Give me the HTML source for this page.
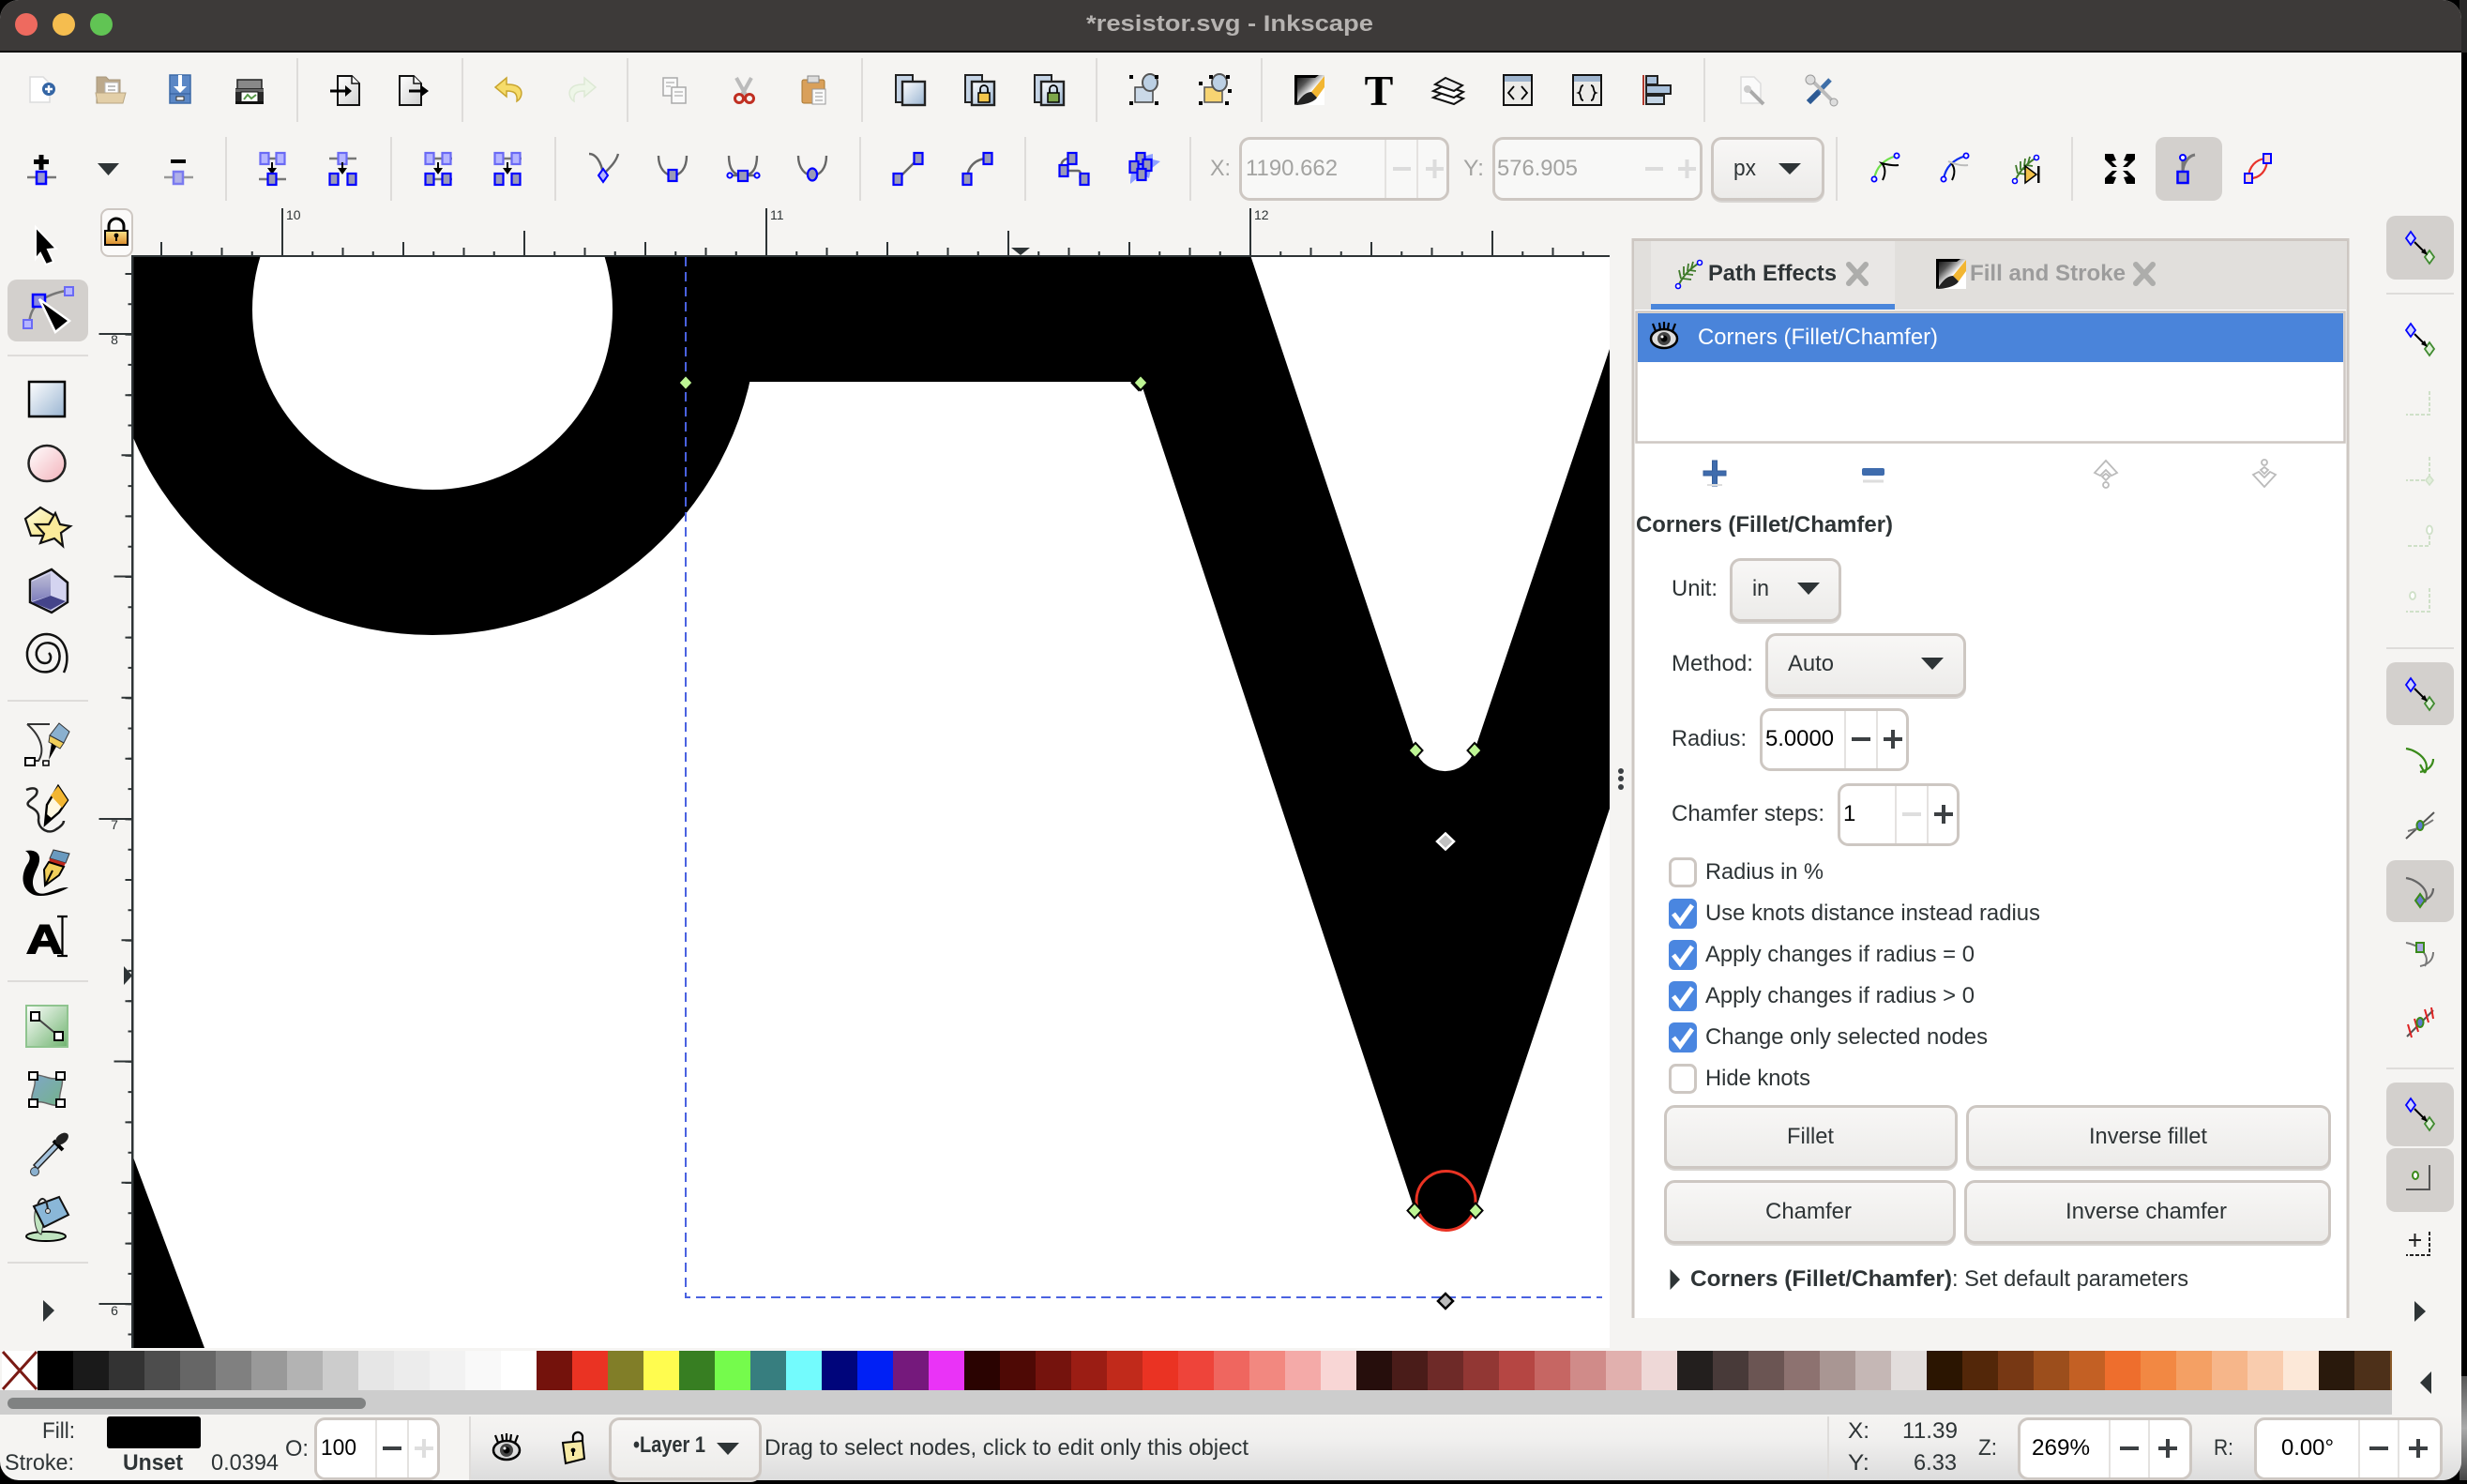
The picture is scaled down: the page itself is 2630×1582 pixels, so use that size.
<!DOCTYPE html>
<html><head><meta charset="utf-8"><title>*resistor.svg - Inkscape</title>
<style>
html,body{margin:0;padding:0;background:#000;width:2630px;height:1582px;overflow:hidden}
svg{display:block}
text{font-family:"Liberation Sans",sans-serif;font-size:24px;fill:#2e3436}
.b{font-weight:bold}
.g{fill:#a3a3a1}
.k{fill:#000}
.box{fill:#fff;stroke:#cdc7c2;stroke-width:3}
.dis{fill:#f8f8f7;stroke:#cdc7c2;stroke-width:3}
.btn{fill:url(#gBtn);stroke:#cdc7c2;stroke-width:3;filter:drop-shadow(0 2px 0 #d8d5d2)}
.div{stroke:#e4e2e0;stroke-width:2}
.sep{stroke:#dedcda;stroke-width:2}
.act{fill:#d3d0cd}
</style></head><body>
<svg xmlns="http://www.w3.org/2000/svg" width="2630" height="1582" viewBox="0 0 2630 1582">
<defs>
<clipPath id="win"><rect x="0" y="0" width="2624" height="1578" rx="20"/></clipPath>
<linearGradient id="gBtn" x1="0" y1="0" x2="0" y2="1"><stop offset="0" stop-color="#f8f7f6"/><stop offset="1" stop-color="#ecebe9"/></linearGradient>
<linearGradient id="gStat" x1="0" y1="0" x2="0" y2="1"><stop offset="0" stop-color="#f5f4f2"/><stop offset=".4" stop-color="#f0efee"/><stop offset="1" stop-color="#dcdcdc"/></linearGradient>
<linearGradient id="gLB" x1="0" y1="0" x2="1" y2="1"><stop offset="0" stop-color="#fff"/><stop offset="1" stop-color="#9ab5d2"/></linearGradient>
<linearGradient id="gPink" x1="0" y1="0" x2="1" y2="1"><stop offset="0" stop-color="#fff"/><stop offset="1" stop-color="#f3b3bb"/></linearGradient>
<linearGradient id="gYel" x1="0" y1="0" x2="1" y2="1"><stop offset="0" stop-color="#fffde0"/><stop offset="1" stop-color="#f4e27c"/></linearGradient>
<linearGradient id="gGold" x1="0" y1="0" x2="0" y2="1"><stop offset="0" stop-color="#fce48a"/><stop offset="1" stop-color="#d98a2a"/></linearGradient>
<linearGradient id="gPage" x1="0" y1="0" x2="1" y2="1"><stop offset="0" stop-color="#fff"/><stop offset="1" stop-color="#cfcfcf"/></linearGradient>
<linearGradient id="gGrn" x1="0" y1="0" x2="1" y2="1"><stop offset="0" stop-color="#fff"/><stop offset="1" stop-color="#6fb36f"/></linearGradient>
<linearGradient id="gMesh" x1="0" y1="0" x2="1" y2="1"><stop offset="0" stop-color="#7fa6c8"/><stop offset="1" stop-color="#74b38a"/></linearGradient>
<linearGradient id="gBox" x1="0" y1="0" x2="0" y2="1"><stop offset="0" stop-color="#b8b8d0"/><stop offset="1" stop-color="#6a6ab0"/></linearGradient>
<linearGradient id="gPen" x1="0" y1="0" x2="1" y2="1"><stop offset="0" stop-color="#000"/><stop offset=".3" stop-color="#555"/><stop offset=".55" stop-color="#fff"/><stop offset="1" stop-color="#fff"/></linearGradient>
<g id="eye"><path d="M-9,-5 L-12,-13 M-4,-7 L-5,-14 M0,-7 L0,-15 M4,-7 L5,-14 M9,-5 L12,-13" stroke="#000" stroke-width="2.2" fill="none"/><ellipse cx="0" cy="3" rx="14" ry="10" fill="#ddd" stroke="#000" stroke-width="2.5"/><circle cx="0" cy="3" r="7" fill="#444"/><circle cx="0" cy="3" r="3.5" fill="#000"/><circle cx="-2" cy="1" r="1.5" fill="#fff"/></g>
<g id="fern"><path d="M-11,13 C-6,2 2,-6 12,-12" stroke="#3f7a2a" stroke-width="2" fill="none"/><path d="M-8,5 L-10,-4 M-5,1 L-5,-8 M-1,-3 L0,-11 M3,-6 L5,-13 M-6,5 L3,6 M-3,0 L5,1 M1,-4 L8,-3" stroke="#3f7a2a" stroke-width="1.8" fill="none"/><circle cx="-11" cy="13" r="2.5" fill="#fff" stroke="#00f" stroke-width="1.6"/><circle cx="12" cy="-12" r="2.5" fill="#fff" stroke="#00f" stroke-width="1.6"/></g>
<g id="tabx"><path d="M-9,-10 L9,10 M9,-10 L-9,10" stroke="#adadab" stroke-width="6" stroke-linecap="round"/></g>
<g id="pen"><path d="M-16,-16H16V16H-16Z" fill="url(#gPen)"/><path d="M-16,-16H10L6,-13H-13V14L-16,16Z" fill="#000"/><path d="M16,-15 L2,2 L8,8 L16,-3Z" fill="#f2b632"/><path d="M2,2 C-5,2 -10,9 -15,16 C-6,16 5,13 8,8Z" fill="#222"/></g>
<g id="snap"><path d="M-10,-17 L-5,-10 L-10,-3 L-15,-10Z" fill="#cfd2ff" stroke="#00f" stroke-width="1.8"/><path d="M10,3 L15,10 L10,17 L5,10Z" fill="#dfeed8" stroke="#3f8a2f" stroke-width="1.8"/><path d="M-6,-6 L6,6" stroke="#000" stroke-width="2"/><path d="M8,8 L1,5 L5,1Z" fill="#000"/></g>
<g id="sq"><rect x="-4.5" y="-6" width="9" height="12" fill="#9a9ab8" stroke="#00f" stroke-width="2.2"/></g>
<g id="sqf"><rect x="-4.5" y="-6" width="9" height="12" fill="#b5b5ff" stroke="#6a6af5" stroke-width="2.2"/></g>
<g id="cb"><rect x="0" y="0" width="30" height="32" rx="6" fill="#4a86e0"/><path d="M5,16 L12,25 L25,7" stroke="#fff" stroke-width="5" fill="none"/></g>
<g id="cu"><rect x="1.5" y="1.5" width="27" height="29" rx="6" fill="#fff" stroke="#cdc7c2" stroke-width="3"/></g>
<g id="nd"><path d="M-7.5,0 L0,-8 L7.5,0 L0,8Z" fill="#bdf593" stroke="#000" stroke-width="2"/></g>
</defs>

<rect width="2630" height="1582" fill="#000"/>
<linearGradient id="gEdge" x1="0" y1="0" x2="0" y2="1"><stop offset="0" stop-color="#555"/><stop offset=".5" stop-color="#aaa"/><stop offset="1" stop-color="#444"/></linearGradient>
<rect x="2622" y="1467" width="8" height="111" fill="url(#gEdge)"/>
<rect x="2622" y="0" width="8" height="56" fill="#2a2928"/>

<g clip-path="url(#win)">
<rect width="2624" height="1578" fill="#f5f4f2"/>
<rect width="2624" height="54" fill="#3d3a39"/>
<rect y="54" width="2624" height="2" fill="#0c0c0c"/>
<rect x="501" y="1508" width="2123" height="70" fill="url(#gStat)"/>
</g>

<circle cx="28" cy="26" r="12" fill="#ee6a5f"/><circle cx="68" cy="26" r="12" fill="#f5bd4f"/><circle cx="108" cy="26" r="12" fill="#61c454"/>
<text x="1158" y="33" class="b" textLength="306" lengthAdjust="spacingAndGlyphs" style="fill:#b6b3b1">*resistor.svg - Inkscape</text>

<!-- toolbar separators -->
<path class="sep" d="M317,62V130M493,62V130M669,62V130M919,62V130M1169,62V130M1345,62V130M1817,62V130M241,146V214M417,146V214M592,146V214M917,146V214M1093,146V214M1269,146V214M1958,146V214M2209,146V214"/>

<!-- toolbar 1 -->
<g transform="translate(43,96)"><path d="M-11,-14H3L10,-7V13H-11Z" fill="#fff" stroke="#dcdcdc" stroke-width="1.5"/><circle cx="9" cy="-1" r="7" fill="#3465a4"/><path d="M5,-1H13M9,-5V3" stroke="#fff" stroke-width="2.4"/></g>
<g transform="translate(118,96)"><path d="M-15,14V-14H-5L-2,-11H10V14Z" fill="#bca98b" stroke="#a8977c"/><rect x="-6" y="-8" width="14" height="16" fill="#fff" stroke="#bbb"/><path d="M-3,-4H5M-3,0H5M-3,4H5" stroke="#aaa" stroke-width="1.5"/><path d="M-16,3H16L13,14H-14Z" fill="#e3cfa8" stroke="#b8a684"/></g>
<g transform="translate(192,95)"><path d="M-11,-15H11V15H-11Z" fill="#5b87c5" stroke="#3d6aa8" stroke-width="1.5"/><path d="M-11,5H11" stroke="#2f5a96"/><path d="M-2,-15V-3H-7L0,4L7,-3H2V-15Z" fill="#fff"/><rect x="-4" y="8" width="8" height="4" fill="#fff" stroke="#333"/></g>
<g transform="translate(266,98)"><rect x="-13" y="-13" width="26" height="10" fill="#888" stroke="#222" stroke-width="1.5"/><rect x="-15" y="-4" width="30" height="15" fill="#2a2a2a"/><rect x="-15" y="-3" width="30" height="3" fill="#666"/><rect x="-9" y="0" width="18" height="12" fill="#fff" stroke="#111"/><path d="M-6,8L-2,3L2,7L7,3" stroke="#5a9a4a" stroke-width="2" fill="none"/><rect x="-15" y="10" width="30" height="3" fill="#111"/></g>
<g transform="translate(367,96)"><path d="M-7,-15H8L16,-7V16H-7Z" fill="url(#gPage)" stroke="#111" stroke-width="2"/><path d="M8,-15V-7H16" fill="#fff" stroke="#111" stroke-width="1.5"/><path d="M-15,1H3" stroke="#000" stroke-width="3"/><path d="M1,-5L8,1L1,7Z" fill="#000"/></g>
<g transform="translate(438,96)"><path d="M-12,-15H3L11,-7V16H-12Z" fill="url(#gPage)" stroke="#111" stroke-width="2"/><path d="M3,-15V-7H11" fill="#fff" stroke="#111" stroke-width="1.5"/><path d="M-2,1H12" stroke="#000" stroke-width="3"/><path d="M11,-5L19,1L11,7Z" fill="#000"/></g>
<g transform="translate(544,96)"><path d="M-4,-13L-16,-3L-4,7V1C4,1 8,3 7,12C14,8 16,-7 -4,-6Z" fill="#f6dc6a" stroke="#c9a52f" stroke-width="1.5"/></g>
<g transform="translate(619,96) scale(-1,1)"><path d="M-4,-13L-16,-3L-4,7V1C4,1 8,3 7,12C14,8 16,-7 -4,-6Z" fill="#eef6e8" stroke="#dde9d5" stroke-width="1.5"/></g>
<g transform="translate(719,96)"><rect x="-12" y="-13" width="15" height="19" fill="#fafafa" stroke="#aaa" stroke-width="1.5"/><rect x="-3" y="-3" width="15" height="17" fill="#fafafa" stroke="#aaa" stroke-width="1.5"/><path d="M-9,-8H0M-9,-4H-4M0,2H9M0,6H9" stroke="#bbb" stroke-width="1.5"/></g>
<g transform="translate(793,96)"><path d="M-8,-13L2,5M8,-13L-2,5" stroke="#bbb" stroke-width="4"/><circle cx="-5" cy="9" r="4.5" fill="none" stroke="#c02f22" stroke-width="3"/><circle cx="6" cy="9" r="4.5" fill="none" stroke="#c02f22" stroke-width="3"/></g>
<g transform="translate(867,96)"><rect x="-12" y="-11" width="24" height="25" rx="2" fill="#d9a05a" stroke="#a87733"/><rect x="-6" y="-15" width="12" height="7" fill="#ddd" stroke="#888"/><rect x="-1" y="-1" width="14" height="16" fill="#fafafa" stroke="#999"/><path d="M2,3H10M2,7H10M2,11H10" stroke="#aaa" stroke-width="1.3"/></g>
<g transform="translate(970,96)"><rect x="-15" y="-16" width="18" height="29" fill="#c5d4e6" stroke="#222" stroke-width="2"/><rect x="-8" y="-9" width="24" height="25" fill="url(#gLB)" stroke="#222" stroke-width="2.4"/></g>
<g transform="translate(1044,96)"><rect x="-15" y="-16" width="18" height="29" fill="#c5d4e6" stroke="#222" stroke-width="2"/><rect x="-8" y="-9" width="24" height="25" fill="url(#gLB)" stroke="#222" stroke-width="2.4"/><rect x="-1" y="3" width="12" height="10" fill="#f3c64c" stroke="#000" stroke-width="1.5"/><path d="M1,3V-1A4,4 0 0 1 9,-1V3" fill="none" stroke="#000" stroke-width="1.8"/></g>
<g transform="translate(1118,96)"><rect x="-15" y="-16" width="18" height="29" fill="#c5d4e6" stroke="#222" stroke-width="2"/><rect x="-8" y="-9" width="24" height="25" fill="url(#gLB)" stroke="#222" stroke-width="2.4"/><rect x="-1" y="3" width="12" height="10" fill="#7da64a" stroke="#000" stroke-width="1.5"/><path d="M1,3V-1A4,4 0 0 1 9,-1V3" fill="none" stroke="#000" stroke-width="1.8"/></g>
<g transform="translate(1219,96)"><rect x="-9" y="-3" width="19" height="16" fill="#cbd9e8" stroke="#444" stroke-width="1.5"/><ellipse cx="7" cy="-8" rx="8" ry="9" fill="#bcd0e4" stroke="#555" stroke-width="2"/><path d="M-15,-16h4v4h-4zM12,-16h4v4h-4zM-15,12h4v4h-4zM12,12h4v4h-4z" fill="#000"/></g>
<g transform="translate(1293,96)"><rect x="-9" y="-3" width="19" height="16" fill="#f7d472" stroke="#555" stroke-width="1.5"/><ellipse cx="7" cy="-8" rx="8" ry="9" fill="#bcd0e4" stroke="#555" stroke-width="2"/><path d="M-15,-9h4v4h-4zM-4,-16h4v4h-4zM14,-16h4v4h-4zM-15,12h4v4h-4zM13,12h4v4h-4z M16,-1h4v4h-4z" fill="#000"/></g>
<use href="#pen" x="1396" y="96"/>
<text x="1470" y="112" text-anchor="middle" style="font-family:'Liberation Serif',serif;font-size:46px;font-weight:bold;fill:#000">T</text>
<g transform="translate(1544,96)" fill="#fff" stroke="#111" stroke-width="2"><path d="M-16,8L-4,2L16,9L6,15Z"/><path d="M-16,1L-4,-5L16,2L6,8Z"/><path d="M-14,-6L-3,-13L15,-5L6,1Z" fill="#eee"/></g>
<g transform="translate(1618,96)"><rect x="-15" y="-16" width="30" height="32" fill="#ecebe8" stroke="#111" stroke-width="2"/><rect x="-14" y="-15" width="28" height="6" fill="#9fb5cf"/><path d="M-4,-4L-10,3L-4,10M4,-4L10,3L4,10" stroke="#000" stroke-width="1.8" fill="none"/></g>
<g transform="translate(1692,96)"><rect x="-15" y="-16" width="30" height="32" fill="#ecebe8" stroke="#111" stroke-width="2"/><rect x="-14" y="-15" width="28" height="6" fill="#9fb5cf"/><path d="M-4,-5C-8,-5 -6,2 -9,3C-6,4 -8,11 -4,11M4,-5C8,-5 6,2 9,3C6,4 8,11 4,11" stroke="#000" stroke-width="1.8" fill="none"/></g>
<g transform="translate(1767,96)"><rect x="-16" y="-16" width="2" height="32" fill="#b03a2e"/><rect x="-12" y="-15" width="12" height="9" fill="#a9c1dc" stroke="#222" stroke-width="2"/><rect x="-12" y="-5" width="26" height="9" fill="#a9c1dc" stroke="#222" stroke-width="2"/><rect x="-12" y="6" width="19" height="9" fill="#c4d5e6" stroke="#222" stroke-width="2"/></g>
<g transform="translate(1868,96)"><path d="M-12,-14H2L9,-7V14H-12Z" fill="#fafafa" stroke="#ddd" stroke-width="1.5"/><path d="M-5,-2L12,15" stroke="#aaa" stroke-width="4"/><circle cx="-5" cy="-1" r="4" fill="#ccc"/></g>
<g transform="translate(1941,96)"><path d="M-13,13L10,-11" stroke="#3f6fa8" stroke-width="5"/><path d="M-2,2L-13,13" stroke="#2d5a94" stroke-width="6"/><path d="M-11,-12L14,13" stroke="#bbb" stroke-width="4"/><circle cx="-11" cy="-11" r="5" fill="#ddd" stroke="#999"/><circle cx="14" cy="13" r="4" fill="#ddd" stroke="#999"/></g>

<!-- toolbar 2 -->
<g transform="translate(44,180)"><rect x="-2.5" y="-15" width="5" height="16" fill="#000"/><rect x="-8" y="-10" width="16" height="5" fill="#000"/><path d="M-15,9H16" stroke="#777" stroke-width="2.5"/><rect x="-5" y="3" width="10" height="13" fill="#9a9ad0" stroke="#00f" stroke-width="2.5"/></g>
<path d="M104,174H127L115.5,187Z" fill="#2e3436"/>
<g transform="translate(190,180)"><rect x="-8" y="-10" width="16" height="4" fill="#000"/><path d="M-15,9H16" stroke="#999" stroke-width="2.5"/><rect x="-5" y="3" width="10" height="13" fill="#b0b0e8" stroke="#7a7af0" stroke-width="2.5"/></g>
<g transform="translate(290,180)"><path d="M-8,-11H10M-14,11H15" stroke="#777" stroke-width="2.4"/><use href="#sqf" x="-8" y="-11"/><use href="#sqf" x="9" y="-11"/><path d="M0,-7V0" stroke="#000" stroke-width="2"/><path d="M-5,-1H5L0,6Z" fill="#000"/><use href="#sq" x="0" y="11"/></g>
<g transform="translate(365,180)"><path d="M-14,-11H15" stroke="#777" stroke-width="2.4"/><use href="#sqf" x="0" y="-11"/><path d="M0,-7V0" stroke="#000" stroke-width="2"/><path d="M-5,-1H5L0,6Z" fill="#000"/><use href="#sq" x="-9" y="11"/><use href="#sq" x="10" y="11"/></g>
<g transform="translate(467,180)"><path d="M-14,-11H15M-14,11H15" stroke="#777" stroke-width="2.4"/><use href="#sqf" x="-9" y="-11"/><use href="#sqf" x="9" y="-11"/><path d="M0,-7V0" stroke="#000" stroke-width="2"/><path d="M-5,-1H5L0,6Z" fill="#000"/><use href="#sq" x="-9" y="11"/><use href="#sq" x="9" y="11"/></g>
<g transform="translate(541,180)"><path d="M-14,-11H15" stroke="#777" stroke-width="2.4"/><use href="#sqf" x="-9" y="-11"/><use href="#sqf" x="9" y="-11"/><path d="M0,-7V0" stroke="#000" stroke-width="2"/><path d="M-5,-1H5L0,6Z" fill="#000"/><use href="#sq" x="-9" y="11"/><use href="#sq" x="9" y="11"/></g>
<g transform="translate(643,180)" fill="none" stroke="#666" stroke-width="2.4"><path d="M-15,-16C-8,-16 -2,-8 0,6"/><path d="M16,-16C14,-8 8,-2 0,6"/><path d="M0,0L5,7L0,14L-5,7Z" fill="#b5b5ff" stroke="#00f" stroke-width="2"/></g>
<g transform="translate(717,180)" fill="none" stroke="#666" stroke-width="2.4"><path d="M-15,-14C-15,0 -7,7 0,7C8,7 15,0 15,-14"/><rect x="-4.5" y="1" width="9" height="12" fill="#9a9ab8" stroke="#00f" stroke-width="2.2"/></g>
<g transform="translate(792,180)" fill="none" stroke="#666" stroke-width="2.4"><path d="M-15,-14C-15,0 -10,7 0,7C10,7 15,0 15,-14"/><path d="M-14,7H14"/><circle cx="-14" cy="7" r="2.6" fill="#fff" stroke="#00f" stroke-width="2"/><circle cx="15" cy="7" r="2.6" fill="#fff" stroke="#00f" stroke-width="2"/><rect x="-5" y="2" width="10" height="11" fill="#9a9ab8" stroke="#00f" stroke-width="2.2"/></g>
<g transform="translate(866,180)" fill="none" stroke="#666" stroke-width="2.4"><path d="M-15,-14C-15,0 -7,7 0,7C8,7 15,0 15,-14"/><ellipse cx="0" cy="6" rx="5" ry="6.5" fill="#9a9ab8" stroke="#00f" stroke-width="2.2"/></g>
<g transform="translate(968,180)"><path d="M-11,11L11,-11" stroke="#666" stroke-width="2.4"/><use href="#sq" x="-11" y="11"/><use href="#sq" x="11" y="-11"/></g>
<g transform="translate(1042,180)"><path d="M-11,11C-11,-2 -2,-11 11,-11" stroke="#666" stroke-width="2.4" fill="none"/><use href="#sq" x="-11" y="11"/><use href="#sq" x="11" y="-11"/></g>
<g transform="translate(1144,180)"><path d="M-1,-11C-15,-13 -15,2 -8,2H5C12,2 2,15 13,11" stroke="#666" stroke-width="2.4" fill="none"/><use href="#sq" x="-1" y="-11"/><use href="#sq" x="-10" y="2"/><use href="#sq" x="12" y="11"/></g>
<g transform="translate(1219,180)"><path d="M-14,16C-14,2 -10,-12 10,-16V-10L18,-8L8,0L6,10L-2,6Z" fill="#8fa0ff"/><use href="#sq" x="-3" y="-11"/><use href="#sq" x="-10" y="-2"/><use href="#sq" x="4" y="-4"/><use href="#sq" x="-2" y="6"/></g>

<rect x="1322.5" y="147.500" width="221" height="65" rx="10" class="dis"/>
<path class="div" d="M1477,149V211M1511,149V211M1747,149V211M1781,149V211"/>
<text x="1290" y="187" class="g" textLength="22" lengthAdjust="spacingAndGlyphs">X:</text>
<text x="1328" y="187" class="g" textLength="98" lengthAdjust="spacingAndGlyphs">1190.662</text>
<path d="M1485,178h19v4h-19zM1520,178h19v4h-19zM1527.500,170h4v20h-4z" fill="#dcdcdc"/>
<rect x="1592.500" y="147.500" width="221" height="65" rx="10" class="dis"/>
<text x="1560" y="187" class="g" textLength="22" lengthAdjust="spacingAndGlyphs">Y:</text>
<text x="1596" y="187" class="g" textLength="86" lengthAdjust="spacingAndGlyphs">576.905</text>
<path d="M1754,178h19v4h-19zM1789,178h19v4h-19zM1796.500,170h4v20h-4z" fill="#dcdcdc"/>
<rect x="1825.500" y="147.500" width="118" height="65" rx="10" class="btn"/>
<text x="1848" y="187" textLength="24" lengthAdjust="spacingAndGlyphs">px</text>
<path d="M1896,174H1920L1908,186Z" fill="#2e3436"/>
<g transform="translate(2010,180)" fill="none"><path d="M-12,11C-10,-2 -2,-10 12,-14" stroke="#6fe04a" stroke-width="2.2"/><path d="M-3,12C2,2 -2,-4 -4,-6C0,-5 8,-3 14,-4" stroke="#000" stroke-width="2"/><circle cx="-12" cy="11" r="2.6" fill="#fff" stroke="#00f" stroke-width="1.8"/><circle cx="12" cy="-14" r="2.6" fill="#fff" stroke="#00f" stroke-width="1.8"/></g>
<g transform="translate(2084,180)" fill="none"><path d="M-12,11C-10,-2 -2,-10 12,-14" stroke="#0a2cf0" stroke-width="2.2"/><path d="M-3,12C2,2 -2,-4 -4,-6" stroke="#000" stroke-width="2"/><path d="M-7,-8C0,-5 8,-3 14,-4" stroke="#bbb" stroke-width="2"/><circle cx="-12" cy="11" r="2.6" fill="#fff" stroke="#00f" stroke-width="1.8"/><circle cx="12" cy="-14" r="2.6" fill="#fff" stroke="#00f" stroke-width="1.8"/></g>
<g transform="translate(2159,180)"><use href="#fern" x="0" y="0"/><path d="M0,-3L12,6L0,15Z" fill="#f2c14a" stroke="#000" stroke-width="1.5"/><rect x="13" y="-3" width="2.5" height="18" fill="#000"/></g>
<g transform="translate(2260,180)" fill="#000"><path d="M-16,-16H-7L-4,-9L-9,-8L-3,-2L-8,-2L-16,-10Z"/><path d="M16,-16H7L4,-9L9,-8L3,-2L8,-2L16,-10Z"/><path d="M-16,16H-7L-4,9L-9,8L-3,2L-8,2L-16,10Z"/><path d="M16,16H7L4,9L9,8L3,2L8,2L16,10Z"/></g>
<rect x="2298" y="146" width="71" height="68" rx="10" class="act"/>
<g transform="translate(2327,180)"><path d="M0,-14V2M0,4C0,-6 6,-14 13,-15" stroke="#777" stroke-width="3" fill="none"/><circle cx="0" cy="-12" r="3" fill="#fff" stroke="#00f" stroke-width="2"/><rect x="-5.500" y="3" width="11" height="12" fill="#9a9ab8" stroke="#00f" stroke-width="2.5"/></g>
<g transform="translate(2407,180)" fill="none"><path d="M-10,10C-10,-2 -2,-11 10,-11C10,2 2,11 -10,10Z" stroke="#e8322a" stroke-width="2.2"/><rect x="-14" y="5" width="8" height="10" fill="#ffd0d0" stroke="#00f" stroke-width="2"/><rect x="6" y="-16" width="8" height="10" fill="#ffd0d0" stroke="#00f" stroke-width="2"/></g>

<!-- canvas -->
<rect x="141" y="272" width="1575" height="1165" fill="#fff"/>
<svg x="141" y="274" width="1575" height="1163" viewBox="141 274 1575 1163">
<circle cx="461" cy="330" r="347" fill="#000"/>
<path d="M141,272H1333L1509,800A33.500,33.500 0 0 0 1572,800L1716,372V862L1573,1290A36,36 0 0 1 1508,1290L1216,407H141Z" fill="#000"/>
<circle cx="461" cy="330" r="192" fill="#fff"/>
<path d="M141,1231L218,1437H141Z" fill="#000"/>
<path d="M731,274V1383H1708" fill="none" stroke="#4a62e0" stroke-width="2" stroke-dasharray="10 6"/>
<use href="#nd" x="731" y="408"/><use href="#nd" x="1214" y="408"/><use href="#nd" x="1216" y="408"/>
<use href="#nd" x="1509" y="800"/><use href="#nd" x="1572" y="800"/>
<ellipse cx="1541.500" cy="1280" rx="31.500" ry="31.500" fill="none" stroke="#ea3323" stroke-width="3"/>
<use href="#nd" x="1508" y="1290.500"/><use href="#nd" x="1573" y="1290.500"/>
<path d="M1532,897L1541,888.500L1550,897L1541,905.500Z" fill="#c0c0c0" stroke="#fff" stroke-width="2.500"/>
<path d="M1533,1387L1541,1379L1549,1387L1541,1395Z" fill="#bbb" stroke="#000" stroke-width="2.500"/>
</svg>

<!-- rulers -->
<g stroke="#2e3436" fill="none">
<path d="M171,270H1716" stroke-width="4" stroke-dasharray="2 30.25"/>
<path d="M171,265H1716" stroke-width="14" stroke-dasharray="2 127"/>
<path d="M171,268H1716" stroke-width="8" stroke-dasharray="0 64.500 2 62.500"/>
<path d="M300,259H1716" stroke-width="26" stroke-dasharray="2 256"/>
<path d="M300,247H1716" stroke-width="50" stroke-dasharray="2 514"/>
<path d="M139,291V1437" stroke-width="5" stroke-dasharray="2 30.300"/>
<path d="M137.500,291V1437" stroke-width="8" stroke-dasharray="2 62.600"/>
<path d="M135.500,355V1437" stroke-width="12" stroke-dasharray="2 127.250"/>
<path d="M131.500,355V1437" stroke-width="20" stroke-dasharray="2 256.500"/>
<path d="M123.500,355V1437" stroke-width="36" stroke-dasharray="2 515"/>
</g>
<rect x="141" y="272" width="1575" height="2" fill="#2e3436"/>
<rect x="140" y="272" width="2.500" height="1165" fill="#2e3436"/>
<g style="fill:#2e3436"><text x="305" y="234" style="font-size:14px">10</text><text x="821" y="234" style="font-size:14px">11</text><text x="1337" y="234" style="font-size:14px">12</text>
<text x="122" y="367" text-anchor="middle" style="font-size:14px">8</text><text x="122" y="884" text-anchor="middle" style="font-size:14px">7</text><text x="122" y="1402" text-anchor="middle" style="font-size:14px">6</text></g>
<path d="M1078,264H1098L1088,272Z" fill="#2e3436"/>
<path d="M132,1030L141,1040L132,1050Z" fill="#2e3436"/>
<!-- lock button -->
<rect x="108" y="223" width="33" height="50" rx="8" fill="#fbfaf9" stroke="#cdc7c2" stroke-width="2"/>
<g transform="translate(124,248)"><path d="M-8,-2V-7A8,8 0 0 1 8,-7V-2" fill="none" stroke="#000" stroke-width="3"/><rect x="-12" y="-2" width="24" height="15" fill="url(#gGold)" stroke="#000" stroke-width="2"/><circle cx="0" cy="3" r="2.4" fill="#000"/><rect x="-1" y="3" width="2" height="6" fill="#000"/></g>

<!-- left toolbar -->
<path d="M38,242L60,265L51,266L57,279L49,282L43,270L38,276Z" fill="#000" stroke="#fff" stroke-width="2"/>
<rect x="8" y="298" width="86" height="66" rx="10" class="act"/>
<g transform="translate(50,330)"><path d="M-19,18C-19,2 -12,-14 20,-20" stroke="#777" stroke-width="2.500" fill="none"/><rect x="-25" y="11" width="9" height="9" fill="#b5b5ff" stroke="#6a6af5" stroke-width="2"/><rect x="19" y="-24" width="9" height="9" fill="#b5b5ff" stroke="#6a6af5" stroke-width="2"/><rect x="-15" y="-16" width="13" height="13" fill="#8a8ae0" stroke="#00f" stroke-width="2.500"/><path d="M-8,-11L24,12L9,24Z" fill="#000" stroke="#fff" stroke-width="2.500"/></g>
<path class="sep" d="M8,379H94M8,747H94M8,1046H94M8,1346H94"/>
<rect x="31" y="407" width="38" height="37" fill="url(#gLB)" stroke="#000" stroke-width="2.500"/>
<ellipse cx="50" cy="494" rx="19.500" ry="19" fill="url(#gPink)" stroke="#222" stroke-width="2.500"/>
<g transform="translate(50,562)" stroke="#111" stroke-width="2.200"><path d="M-23,-9L-7,-21L10,-11L4,9L-17,9Z" fill="url(#gYel)"/><path d="M9,-15L14,-3L25,-1L15,6L17,20L8,12L-7,17L-3,7L-12,-3L2,-3Z" fill="#fbeb9a"/></g>
<g transform="translate(51,630)"><path d="M-19,-12L4,-23L21,-9V12L4,23L-19,12Z" fill="#d4d4f0" stroke="#111" stroke-width="2.500"/><path d="M-17,-10L3,-19V5L-17,11Z" fill="url(#gBox)" opacity=".8"/><path d="M3,5L19,11L3,20L-17,12Z" fill="#44448a"/></g>
<path d="M68,717C76,700 70,677 50,676C35,676 28,690 29,699C30,712 42,718 52,716C62,714 66,702 62,692C58,684 46,683 41,690C36,697 40,707 48,707C54,707 56,700 52,696" fill="none" stroke="#111" stroke-width="2.500"/>
<!-- pen tool -->
<path d="M29,772H53M29,772C44,785 48,800 41,811H35M45,813H49" fill="none" stroke="#333" stroke-width="2"/>
<rect x="27" y="808" width="10" height="8" fill="#fff" stroke="#000" stroke-width="2"/><rect x="46" y="811" width="6" height="5" fill="#fff" stroke="#000" stroke-width="1.500"/>
<path d="M63,771L74,780L68,792L53,784Z" fill="#8ab0cf" stroke="#333"/><path d="M53,784L68,792L64,798L52,791Z" fill="#f2cf5a" stroke="#333"/><path d="M55,792L60,796L52,810Z" fill="#000"/>
<!-- pencil -->
<path d="M28,842C38,838 42,842 38,848C32,854 26,856 32,860C40,864 42,868 41,874C41,884 52,890 60,884C65,881 68,878 68,875" fill="none" stroke="#222" stroke-width="2.500"/>
<path d="M48,879L50,858L62,838L72,853L63,866Z" fill="#fff8e0" stroke="#000" stroke-width="2.400"/>
<path d="M62,838L72,853L66,861L54,848Z" fill="#f2b632"/>
<path d="M48,879L50,868L56,873Z" fill="#000"/>
<!-- calligraphy -->
<path d="M27,907C38,905 45,910 41,922C38,930 31,940 38,950C46,958 60,945 73,946C62,953 42,958 34,953C20,945 24,928 30,920C33,915 32,910 27,907Z" fill="#000"/>
<path d="M57,906L74,910L70,920L53,915Z" fill="#6a9abf" stroke="#333"/><path d="M53,915L70,920L68,924L52,919Z" fill="#c0281c"/>
<path d="M52,919L68,924L63,933L48,944L47,927Z" fill="#f2cf5a" stroke="#000" stroke-width="2"/><path d="M48,944L56,928" stroke="#000" stroke-width="2"/>
<text x="28" y="1016" class="b k" style="font-size:44px;stroke:#000;stroke-width:1.500" textLength="39" lengthAdjust="spacingAndGlyphs">A</text>
<path d="M61,977H72M66.500,977V1019M61,1019H72" stroke="#000" stroke-width="2.200" fill="none"/>
<rect x="28" y="1072" width="44" height="44" fill="url(#gGrn)" stroke="#8fc48f" stroke-width="2"/>
<path d="M38,1084L62,1104" stroke="#444" stroke-width="2"/><rect x="33" y="1079" width="9" height="9" fill="#fff" stroke="#000" stroke-width="2"/><rect x="58" y="1100" width="9" height="9" fill="#fff" stroke="#000" stroke-width="2"/>
<path d="M35,1147C45,1143 55,1155 65,1147C70,1155 60,1168 65,1177C55,1182 45,1170 35,1177C30,1168 42,1155 35,1147Z" fill="url(#gMesh)" stroke="#666" stroke-width="1.500"/>
<path d="M31,1143h9v8h-9zM60,1143h9v8h-9zM31,1172h9v8h-9zM60,1172h9v8h-9z" fill="#fff" stroke="#000" stroke-width="2"/>
<g transform="translate(50,1230)"><path d="M-14,12L10,-13L14,-9L-10,16Z" fill="#a5c3dd" stroke="#222" stroke-width="1.500"/><path d="M7,-14L17,-4" stroke="#000" stroke-width="4"/><ellipse cx="16" cy="-16" rx="8" ry="5" fill="#222" transform="rotate(-40 16 -16)"/><circle cx="-13" cy="19" r="4.500" fill="#8ab0cf" stroke="#333"/></g>
<g transform="translate(50,1298)"><ellipse cx="-1" cy="20" rx="21" ry="5" fill="#bfe3bf" stroke="#000" stroke-width="2"/><path d="M-12,-10C-15,2 -12,16 -6,18L-2,-3Z" fill="#bfe3bf" stroke="#333"/><path d="M-14,-12L13,-22L23,-3L-3,10Z" fill="#8ab7d8" stroke="#111" stroke-width="2"/><path d="M-10,-13C-7,-24 0,-22 1,-8" fill="none" stroke="#222" stroke-width="2"/><circle cx="1" cy="-7" r="2.500" fill="#ddd" stroke="#222"/></g>
<path d="M46,1386L58,1397L46,1409Z" fill="#2e3436"/>

<!-- palette -->
<rect x="2" y="1440" width="38" height="42" fill="#fff"/>
<path d="M3,1441L39,1481M39,1441L3,1481" stroke="#7a1a14" stroke-width="3"/>
<g>
<rect x="40" y="1440" width="38" height="42" fill="#000000"/><rect x="78" y="1440" width="38" height="42" fill="#1a1a1a"/><rect x="116" y="1440" width="38" height="42" fill="#333333"/><rect x="154" y="1440" width="38" height="42" fill="#4d4d4d"/><rect x="192" y="1440" width="38" height="42" fill="#666666"/><rect x="230" y="1440" width="38" height="42" fill="#808080"/><rect x="268" y="1440" width="38" height="42" fill="#999999"/><rect x="306" y="1440" width="38" height="42" fill="#b3b3b3"/><rect x="344" y="1440" width="38" height="42" fill="#cccccc"/><rect x="382" y="1440" width="38" height="42" fill="#e6e6e6"/><rect x="420" y="1440" width="38" height="42" fill="#ececec"/><rect x="458" y="1440" width="38" height="42" fill="#f2f2f2"/><rect x="496" y="1440" width="38" height="42" fill="#f9f9f9"/><rect x="534" y="1440" width="38" height="42" fill="#ffffff"/><rect x="572" y="1440" width="38" height="42" fill="#74120c"/><rect x="610" y="1440" width="38" height="42" fill="#ea3323"/><rect x="648" y="1440" width="38" height="42" fill="#817e28"/><rect x="686" y="1440" width="38" height="42" fill="#fffc4f"/><rect x="724" y="1440" width="38" height="42" fill="#377e22"/><rect x="762" y="1440" width="38" height="42" fill="#75fb4c"/><rect x="800" y="1440" width="38" height="42" fill="#377e7f"/><rect x="838" y="1440" width="38" height="42" fill="#73fbfd"/><rect x="876" y="1440" width="38" height="42" fill="#00057b"/><rect x="914" y="1440" width="38" height="42" fill="#0020f5"/><rect x="952" y="1440" width="38" height="42" fill="#75197c"/><rect x="990" y="1440" width="38" height="42" fill="#ea33f7"/><rect x="1028" y="1440" width="38" height="42" fill="#2a0301"/><rect x="1066" y="1440" width="38" height="42" fill="#4e0905"/><rect x="1104" y="1440" width="38" height="42" fill="#75130d"/><rect x="1142" y="1440" width="38" height="42" fill="#9b1d14"/><rect x="1180" y="1440" width="38" height="42" fill="#c12a1b"/><rect x="1218" y="1440" width="38" height="42" fill="#ea3323"/><rect x="1256" y="1440" width="38" height="42" fill="#ee443a"/><rect x="1294" y="1440" width="38" height="42" fill="#ef665f"/><rect x="1332" y="1440" width="38" height="42" fill="#f28880"/><rect x="1370" y="1440" width="38" height="42" fill="#f4aaa8"/><rect x="1408" y="1440" width="38" height="42" fill="#f8d6d5"/><rect x="1446" y="1440" width="38" height="42" fill="#260e0c"/><rect x="1484" y="1440" width="38" height="42" fill="#4a1c19"/><rect x="1522" y="1440" width="38" height="42" fill="#6e2a28"/><rect x="1560" y="1440" width="38" height="42" fill="#923734"/><rect x="1598" y="1440" width="38" height="42" fill="#b54643"/><rect x="1636" y="1440" width="38" height="42" fill="#c66663"/><rect x="1674" y="1440" width="38" height="42" fill="#d08b89"/><rect x="1712" y="1440" width="38" height="42" fill="#e1b0ae"/><rect x="1750" y="1440" width="38" height="42" fill="#eed8d7"/><rect x="1788" y="1440" width="38" height="42" fill="#231f1e"/><rect x="1826" y="1440" width="38" height="42" fill="#483a39"/><rect x="1864" y="1440" width="38" height="42" fill="#6b5553"/><rect x="1902" y="1440" width="38" height="42" fill="#8d7270"/><rect x="1940" y="1440" width="38" height="42" fill="#a99693"/><rect x="1978" y="1440" width="38" height="42" fill="#c5b7b5"/><rect x="2016" y="1440" width="38" height="42" fill="#e2dddc"/><rect x="2054" y="1440" width="38" height="42" fill="#2b1501"/><rect x="2092" y="1440" width="38" height="42" fill="#532709"/><rect x="2130" y="1440" width="38" height="42" fill="#773814"/><rect x="2168" y="1440" width="38" height="42" fill="#9c4e1c"/><rect x="2206" y="1440" width="38" height="42" fill="#c36024"/><rect x="2244" y="1440" width="38" height="42" fill="#ee6e2d"/><rect x="2282" y="1440" width="38" height="42" fill="#f28843"/><rect x="2320" y="1440" width="38" height="42" fill="#f4a064"/><rect x="2358" y="1440" width="38" height="42" fill="#f6b68a"/><rect x="2396" y="1440" width="38" height="42" fill="#f9ccae"/><rect x="2434" y="1440" width="38" height="42" fill="#fce8d8"/><rect x="2472" y="1440" width="38" height="42" fill="#29190c"/><rect x="2510" y="1440" width="38" height="42" fill="#4d3019"/><rect x="2548" y="1440" width="2" height="42" fill="#8a5a2a"/>
</g>
<rect x="0" y="1482" width="2550" height="26" fill="#cdcdcd"/>
<rect x="8" y="1490" width="382" height="12" rx="6" fill="#808282"/>

<!-- dock handle -->
<circle cx="1728" cy="822" r="3" fill="#3c4043"/><circle cx="1728" cy="830" r="3" fill="#3c4043"/><circle cx="1728" cy="839" r="3" fill="#3c4043"/>

<!-- panel -->
<rect x="1741" y="255" width="762" height="1150" fill="#fff"/>
<path d="M1741,1405V255.500H2503V1405" fill="none" stroke="#cdc7c2" stroke-width="3"/>
<rect x="1742" y="257" width="760" height="73" fill="#e1dfdc"/>
<rect x="1760" y="257" width="260" height="67" fill="#e9e7e5"/>
<rect x="1760" y="324" width="260" height="6" fill="#4a86db"/>
<use href="#fern" x="1800" y="292"/>
<text x="1821" y="299" class="b" textLength="137" lengthAdjust="spacingAndGlyphs">Path Effects</text>
<use href="#tabx" x="1980" y="292"/>
<use href="#pen" x="2080" y="292"/>
<text x="2100" y="299" class="b" textLength="166" lengthAdjust="spacingAndGlyphs" style="fill:#9c9c9c">Fill and Stroke</text>
<use href="#tabx" x="2286" y="292"/>
<rect x="1744.500" y="332.500" width="755" height="139" fill="#fff" stroke="#cdc7c2" stroke-width="2.500"/>
<rect x="1746" y="334" width="752" height="52" fill="#4a84da"/>
<use href="#eye" x="1774" y="358"/>
<text x="1810" y="367" textLength="256" lengthAdjust="spacingAndGlyphs" style="fill:#fff">Corners (Fillet/Chamfer)</text>
<g transform="translate(1828,505)"><path d="M-2.500,-14H2.500V-3H12V2H2.500V13H-2.500V2H-12V-3H-2.500Z" fill="#3f6cad" stroke="#345d9a"/><path d="M-8,12H8" stroke="#ddd" stroke-width="2"/></g>
<g transform="translate(1997,505)"><rect x="-12" y="-6" width="24" height="8" rx="2" fill="#3f6cad"/><path d="M-11,8H11" stroke="#ddd" stroke-width="3"/></g>
<g transform="translate(2245,505)" fill="#fff" stroke="#bbb" stroke-width="1.800"><path d="M-12,-1L0,-14L12,-1L6,2L0,-4L-6,2Z"/><path d="M-4,3L0,0L4,3L0,7Z"/><circle cx="0" cy="12" r="3"/></g>
<g transform="translate(2414,505)" fill="#fff" stroke="#bbb" stroke-width="1.800"><circle cx="0" cy="-12" r="3"/><path d="M-4,-4L0,-7L4,-4L0,0Z"/><path d="M-12,1L0,14L12,1L6,-2L0,4L-6,-2Z"/></g>
<text x="1744" y="567" class="b" textLength="274" lengthAdjust="spacingAndGlyphs">Corners (Fillet/Chamfer)</text>

<text x="1782" y="635" textLength="49" lengthAdjust="spacingAndGlyphs">Unit:</text>
<rect x="1845.500" y="596.500" width="116" height="65" rx="10" class="btn"/>
<text x="1868" y="635" textLength="18" lengthAdjust="spacingAndGlyphs">in</text>
<path d="M1916,621H1940L1928,634Z" fill="#2e3436"/>
<text x="1782" y="715" textLength="87" lengthAdjust="spacingAndGlyphs">Method:</text>
<rect x="1883.500" y="676.500" width="211" height="65" rx="10" class="btn"/>
<text x="1906" y="715" textLength="49" lengthAdjust="spacingAndGlyphs">Auto</text>
<path d="M2048,701H2072L2060,714Z" fill="#2e3436"/>
<text x="1782" y="795" textLength="80" lengthAdjust="spacingAndGlyphs">Radius:</text>
<rect x="1877.500" y="756.500" width="156" height="64" rx="10" class="box"/>
<path class="div" d="M1967,758V819M2001,758V819"/>
<text x="1882" y="795" class="k" textLength="73" lengthAdjust="spacingAndGlyphs">5.0000</text>
<path d="M1974,786h20v4h-20zM2008,786h20v4h-20zM2016,778h4v20h-4z" fill="#3c4043"/>
<text x="1782" y="875" textLength="163" lengthAdjust="spacingAndGlyphs">Chamfer steps:</text>
<rect x="1960.500" y="836.500" width="127" height="64" rx="10" class="box"/>
<path class="div" d="M2021,838V899M2055,838V899"/>
<text x="1965" y="875" class="k">1</text>
<path d="M2028,866h20v4h-20z" fill="#dedede"/><path d="M2062,866h20v4h-20zM2070,858h4v20h-4z" fill="#3c4043"/>

<use href="#cu" x="1779" y="914"/><text x="1818" y="937" textLength="126" lengthAdjust="spacingAndGlyphs">Radius in %</text>
<use href="#cb" x="1779" y="958"/><text x="1818" y="981" textLength="357" lengthAdjust="spacingAndGlyphs">Use knots distance instead radius</text>
<use href="#cb" x="1779" y="1002"/><text x="1818" y="1025" textLength="287" lengthAdjust="spacingAndGlyphs">Apply changes if radius = 0</text>
<use href="#cb" x="1779" y="1046"/><text x="1818" y="1069" textLength="287" lengthAdjust="spacingAndGlyphs">Apply changes if radius &gt; 0</text>
<use href="#cb" x="1779" y="1090"/><text x="1818" y="1113" textLength="301" lengthAdjust="spacingAndGlyphs">Change only selected nodes</text>
<use href="#cu" x="1779" y="1134"/><text x="1818" y="1157" textLength="112" lengthAdjust="spacingAndGlyphs">Hide knots</text>

<rect x="1775.500" y="1179.500" width="310" height="65" rx="10" class="btn"/>
<text x="1905" y="1219" textLength="50" lengthAdjust="spacingAndGlyphs">Fillet</text>
<rect x="2097.500" y="1179.500" width="386" height="65" rx="10" class="btn"/>
<text x="2227" y="1219" textLength="126" lengthAdjust="spacingAndGlyphs">Inverse fillet</text>
<rect x="1775.500" y="1259.500" width="308" height="65" rx="10" class="btn"/>
<text x="1882" y="1299" textLength="92" lengthAdjust="spacingAndGlyphs">Chamfer</text>
<rect x="2095.500" y="1259.500" width="388" height="65" rx="10" class="btn"/>
<text x="2202" y="1299" textLength="172" lengthAdjust="spacingAndGlyphs">Inverse chamfer</text>
<path d="M1780.500,1353L1791,1364L1780.500,1375Z" fill="#2e3436"/>
<text x="1802" y="1371" class="b" textLength="279" lengthAdjust="spacingAndGlyphs">Corners (Fillet/Chamfer)</text>
<text x="2081" y="1371" textLength="252" lengthAdjust="spacingAndGlyphs">: Set default parameters</text>

<!-- right snap bar -->
<rect x="2544" y="230" width="72" height="68" rx="10" class="act"/><use href="#snap" x="2580" y="264"/>
<path class="sep" d="M2544,313H2616M2544,691H2616M2544,1139H2616" stroke-width="3"/>
<use href="#snap" x="2580" y="362"/>
<g fill="none" stroke="#cfe0c8" stroke-width="2" stroke-dasharray="4 2">
<path d="M2590,417V442H2565"/><path d="M2590,487V512H2565"/><path d="M2590,565V582H2565"/><path d="M2590,627V652H2565"/></g>
<path d="M2586,512L2590,507L2594,512L2590,517Z" fill="#e2efdc" stroke="#cfe0c8" stroke-width="1.500"/>
<ellipse cx="2590" cy="565" rx="3" ry="4.500" fill="#fff" stroke="#cfe0c8" stroke-width="1.800"/>
<ellipse cx="2572" cy="635" rx="3" ry="4" fill="#fff" stroke="#cfe0c8" stroke-width="1.800"/>
<rect x="2544" y="706" width="72" height="67" rx="10" class="act"/><use href="#snap" x="2580" y="740"/>
<path d="M2565,798C2578,800 2592,812 2585,824M2594,809C2594,815 2590,821 2580,823M2585,824L2580,815" fill="none" stroke="#3a8a1a" stroke-width="2.200"/>
<g fill="none" stroke="#555" stroke-width="2"><path d="M2565,894L2595,866"/><path d="M2567,886C2575,884 2586,880 2594,874" stroke="#777"/></g>
<ellipse cx="2580" cy="880" rx="3.500" ry="5" fill="#5a7ad0" stroke="#3a8a1a" stroke-width="2"/>
<rect x="2544" y="917" width="72" height="66" rx="10" class="act"/>
<path d="M2565,936C2578,938 2592,950 2585,962M2594,947C2594,953 2590,959 2582,960" fill="none" stroke="#666" stroke-width="2.200"/>
<path d="M2580,953L2585,960L2580,967L2575,960Z" fill="#6a7ad0" stroke="#3a8a1a" stroke-width="2"/>
<path d="M2565,1005C2578,1007 2592,1018 2585,1030M2594,1015C2594,1022 2590,1028 2580,1030" fill="none" stroke="#777" stroke-width="2"/>
<rect x="2576" y="1005" width="8" height="10" fill="#a8a8e0" stroke="#3a8a1a" stroke-width="2"/>
<path d="M2566,1105L2594,1077" stroke="#555" stroke-width="2"/>
<path d="M2567,1092L2571,1106M2574,1086L2578,1100M2585,1076L2589,1090M2592,1074L2594,1086" stroke="#d22" stroke-width="2"/>
<ellipse cx="2580" cy="1090" rx="3.500" ry="5" fill="#5a7ad0" stroke="#3a8a1a" stroke-width="2"/>
<rect x="2544" y="1154" width="72" height="68" rx="10" class="act"/><use href="#snap" x="2580" y="1188"/>
<rect x="2544" y="1224" width="72" height="68" rx="10" class="act"/>
<path d="M2590,1242V1268H2565" fill="none" stroke="#555" stroke-width="2"/>
<ellipse cx="2575" cy="1253" rx="3" ry="4" fill="#fff" stroke="#3a8a1a" stroke-width="2"/>
<path d="M2590,1313V1338H2565" fill="none" stroke="#222" stroke-width="2" stroke-dasharray="4 2"/>
<path d="M2568,1322H2581M2574.500,1315V1329" stroke="#222" stroke-width="2"/>
<path d="M2574,1387L2586,1398L2574,1409Z" fill="#2e3436"/>
<path d="M2592,1462L2580,1474L2592,1486Z" fill="#2e3436"/>

<!-- status bar -->
<text x="45" y="1533" textLength="35" lengthAdjust="spacingAndGlyphs">Fill:</text>
<rect x="114" y="1510" width="100" height="34" rx="3" fill="#000"/>
<text x="5" y="1567" textLength="74" lengthAdjust="spacingAndGlyphs">Stroke:</text>
<text x="131" y="1567" class="b" textLength="64" lengthAdjust="spacingAndGlyphs">Unset</text>
<text x="225" y="1567" textLength="72" lengthAdjust="spacingAndGlyphs">0.0394</text>
<text x="304" y="1552" textLength="25" lengthAdjust="spacingAndGlyphs">O:</text>
<rect x="336.500" y="1512.500" width="131" height="64" rx="10" class="box"/>
<path class="div" d="M401,1514V1575M435,1514V1575"/>
<text x="342" y="1551" class="k" textLength="38" lengthAdjust="spacingAndGlyphs">100</text>
<path d="M408,1542h20v4h-20z" fill="#3c4043"/><path d="M442,1542h20v4h-20zM450,1534h4v20h-4z" fill="#dedede"/>
<path class="sep" d="M501,1510V1578M1949,1510V1578"/>
<use href="#eye" x="540" y="1543"/>
<g transform="translate(612,1545)"><path d="M-1,-7V-12A5,5 0 0 1 9,-14V-9" fill="none" stroke="#000" stroke-width="2.200"/><path d="M-12,-7L9,-9L11,10L-9,15Z" fill="#f7eaa5" stroke="#000" stroke-width="2"/><circle cx="-1" cy="1" r="2.400" fill="#000"/><rect x="-2" y="1" width="2" height="6" fill="#000"/></g>
<rect x="650.500" y="1512.500" width="160" height="64" rx="10" class="btn"/>
<text x="675" y="1548" class="b" textLength="77" lengthAdjust="spacingAndGlyphs">•Layer 1</text>
<path d="M764,1538H788L776,1551Z" fill="#2e3436"/>
<text x="815" y="1551" textLength="516" lengthAdjust="spacingAndGlyphs">Drag to select nodes, click to edit only this object</text>
<text x="1970" y="1533" textLength="23" lengthAdjust="spacingAndGlyphs">X:</text>
<text x="2028" y="1533" textLength="59" lengthAdjust="spacingAndGlyphs">11.39</text>
<text x="1970" y="1567" textLength="23" lengthAdjust="spacingAndGlyphs">Y:</text>
<text x="2040" y="1567" textLength="46" lengthAdjust="spacingAndGlyphs">6.33</text>
<text x="2109" y="1551" textLength="20" lengthAdjust="spacingAndGlyphs">Z:</text>
<rect x="2152.500" y="1512.500" width="183" height="64" rx="10" class="box"/>
<path class="div" d="M2249,1514V1575M2291,1514V1575"/>
<text x="2166" y="1551" class="k" textLength="62" lengthAdjust="spacingAndGlyphs">269%</text>
<path d="M2260,1542h20v4h-20zM2301,1542h20v4h-20zM2309,1534h4v20h-4z" fill="#3c4043"/>
<text x="2360" y="1551" textLength="21" lengthAdjust="spacingAndGlyphs">R:</text>
<rect x="2404.500" y="1512.500" width="198" height="64" rx="10" class="box"/>
<path class="div" d="M2515,1514V1575M2557,1514V1575"/>
<text x="2432" y="1551" class="k" textLength="56" lengthAdjust="spacingAndGlyphs">0.00°</text>
<path d="M2526,1542h20v4h-20zM2568,1542h20v4h-20zM2576,1534h4v20h-4z" fill="#3c4043"/>
</svg>
</body></html>
